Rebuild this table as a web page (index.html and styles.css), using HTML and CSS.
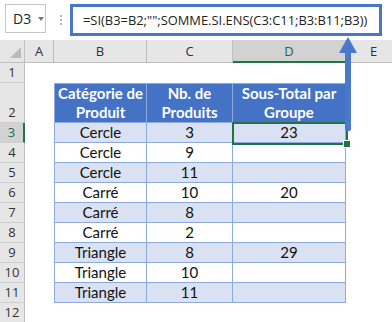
FILE: index.html
```html
<!DOCTYPE html>
<html lang="fr">
<head>
<meta charset="utf-8">
<link rel="stylesheet" href="styles.css">
</head>
<body>
<div class="screen">
  <div class="topbar">
    <div class="namebox"><span class="nb-text">D3</span><span class="nb-caret"></span></div>
    <div class="grip"><i></i><i></i><i></i></div>
    <div class="formula">=SI(B3=B2;"";SOMME.SI.ENS(C3:C11;B3:B11;B3))</div>
  </div>
  <div class="sheet">
    <div class="corner"><span class="corner-tri"></span></div>
    <div class="colh">A</div>
    <div class="colh">B</div>
    <div class="colh">C</div>
    <div class="colh sel">D</div>
    <div class="colh">E</div>

    <div class="rowh">1</div><div></div><div></div><div></div><div></div><div></div>

    <div class="rowh">2</div><div></div>
    <div class="th first">Catégorie de<br>Produit</div>
    <div class="th">Nb. de<br>Produits</div>
    <div class="th">Sous-Total par<br>Groupe</div><div></div>

    <div class="rowh sel">3</div><div></div>
    <div class="td band first">Cercle</div><div class="td band">3</div><div class="td band">23</div><div></div>

    <div class="rowh">4</div><div></div>
    <div class="td first">Cercle</div><div class="td">9</div><div class="td"></div><div></div>

    <div class="rowh">5</div><div></div>
    <div class="td band first">Cercle</div><div class="td band">11</div><div class="td band"></div><div></div>

    <div class="rowh">6</div><div></div>
    <div class="td first">Carré</div><div class="td">10</div><div class="td">20</div><div></div>

    <div class="rowh">7</div><div></div>
    <div class="td band first">Carré</div><div class="td band">8</div><div class="td band"></div><div></div>

    <div class="rowh">8</div><div></div>
    <div class="td first">Carré</div><div class="td">2</div><div class="td"></div><div></div>

    <div class="rowh">9</div><div></div>
    <div class="td band first">Triangle</div><div class="td band">8</div><div class="td band">29</div><div></div>

    <div class="rowh">10</div><div></div>
    <div class="td first">Triangle</div><div class="td">10</div><div class="td"></div><div></div>

    <div class="rowh">11</div><div></div>
    <div class="td band first">Triangle</div><div class="td band">11</div><div class="td band"></div><div></div>

    <div class="rowh">12</div><div></div><div></div><div></div><div></div><div></div>
  </div>

  <div class="selection"><span class="handle"></span></div>

  <svg class="arrow" width="392" height="322" viewBox="0 0 392 322">
    <path d="M345 52 H351 V129 Q351 131 349 131 H347 Q345 131 345 129 Z" fill="#4a78cc"/>
    <path d="M348 37 L357 53 L339 53 Z" fill="#4a78cc"/>
  </svg>
</div>
</body>
</html>
```

FILE: styles.css
```css
html, body {
  margin: 0;
  padding: 0;
  overflow: hidden;
  background: #fff;
}

.screen {
  position: relative;
  width: 392px;
  height: 322px;
  overflow: hidden;
}

.topbar {
  display: flex;
  align-items: flex-start;
  height: 40px;
  box-sizing: border-box;
  padding: 4px 0 0 5px;
  background: #fff;
}

.namebox {
  width: 41px;
  height: 29px;
  box-sizing: border-box;
  border: 1px solid #c6c6c6;
  display: flex;
  align-items: center;
  padding-left: 7px;
  font-family: "Open Sans", "Noto Sans", sans-serif;
  font-size: 14px;
  color: #222;
}

.nb-caret {
  margin-left: 7px;
  width: 0;
  height: 0;
  border-left: 3.5px solid transparent;
  border-right: 3.5px solid transparent;
  border-top: 4px solid #777;
}

.grip {
  display: flex;
  flex-direction: column;
  gap: 2px;
  margin: 11px 8px 0 14px;
}

.grip i {
  display: block;
  width: 2px;
  height: 2px;
  background: #b5b5b5;
}

.formula {
  width: 312px;
  height: 32px;
  box-sizing: border-box;
  border: 3px solid #4a76c8;
  padding-left: 10px;
  display: flex;
  align-items: center;
  font-family: "Open Sans", "Noto Sans", sans-serif;
  font-size: 12.9px;
  color: #222;
  white-space: nowrap;
  overflow: hidden;
}

.sheet {
  display: grid;
  grid-template-columns: 25px 29px 93px 86px 113px 56px;
  grid-template-rows: 23px 20px 40px repeat(9, 20px) 20px;
  width: 402px;
  font-family: Lato, "Open Sans", sans-serif;
  font-size: 15px;
  color: #111;
}

.corner {
  position: relative;
  background: #e6e6e6;
  border-right: 1px solid #c0c0c0;
  border-bottom: 1px solid #c0c0c0;
  box-sizing: border-box;
}

.corner-tri {
  position: absolute;
  right: 3px;
  bottom: 4px;
  width: 0;
  height: 0;
  border-left: 11px solid transparent;
  border-bottom: 11px solid #b9b9b9;
}

.colh {
  background: #e6e6e6;
  border-right: 1px solid #c0c0c0;
  border-bottom: 1px solid #c0c0c0;
  box-sizing: border-box;
  display: flex;
  align-items: center;
  justify-content: center;
  font-family: "Open Sans", "Noto Sans", sans-serif;
  font-size: 13px;
  color: #333;
}

.colh.sel {
  background: #d2d2d2;
  border-bottom: 2px solid #217346;
  color: #1e6b40;
}

.rowh {
  background: #e6e6e6;
  border-right: 1px solid #c0c0c0;
  border-bottom: 1px solid #cfcfcf;
  box-sizing: border-box;
  display: flex;
  align-items: flex-end;
  justify-content: center;
  padding-bottom: 1px;
  font-family: "Open Sans", "Noto Sans", sans-serif;
  font-size: 13px;
  line-height: 18px;
  color: #333;
}

.rowh.sel {
  background: #d2d2d2;
  border-right: 2px solid #217346;
  color: #1e6b40;
}

.th, .td {
  box-sizing: border-box;
  border-right: 1px solid #8ea9db;
  border-bottom: 1px solid #8ea9db;
  text-align: center;
}

.th {
  background: #4472c4;
  color: #fff;
  font-weight: bold;
  line-height: 19px;
  border-top: 1px solid #8ea9db;
  display: flex;
  align-items: center;
  justify-content: center;
}

.td {
  line-height: 19px;
  background: #fff;
}

.td.band {
  background: #d9e1f2;
}

.first {
  border-left: 1px solid #8ea9db;
}

.selection {
  position: absolute;
  left: 232px;
  top: 122px;
  width: 116px;
  height: 23px;
  box-sizing: border-box;
  border: 2px solid #217346;
}

.handle {
  position: absolute;
  right: -5px;
  bottom: -5px;
  width: 6px;
  height: 6px;
  background: #217346;
  border: 1px solid #fff;
}

.arrow {
  position: absolute;
  left: 0;
  top: 0;
  pointer-events: none;
}
```
